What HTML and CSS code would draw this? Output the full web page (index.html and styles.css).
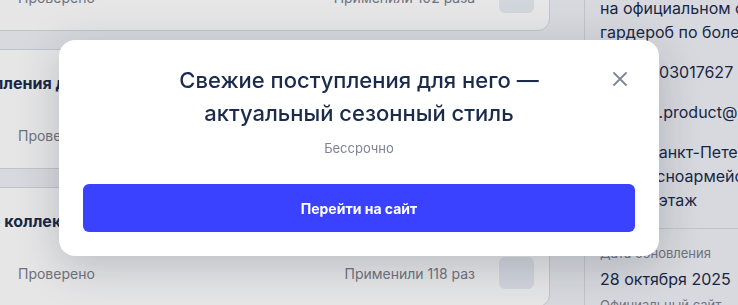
FILE: index.html
```html
<!DOCTYPE html>
<html lang="ru">
<head>
<meta charset="utf-8">
<title>Промокод</title>
<link rel="stylesheet" href="styles.css">
</head>
<body>
<div class="page">
  <div class="feed">
    <div class="card">
      <div class="card-title">Дарим скидку на первый заказ в приложении</div>
      <div class="card-meta">
        <span class="status">Проверено</span>
        <div class="usage"><span>Применили 102 раза</span><span class="thumb"></span></div>
      </div>
    </div>
    <div class="card">
      <div class="card-title">Свежие поступления для него — актуальный сезонный стиль</div>
      <div class="card-meta">
        <span class="status">Проверено</span>
        <div class="usage"><span>Применили 96 раз</span><span class="thumb"></span></div>
      </div>
    </div>
    <div class="card">
      <div class="card-title t3">Скидки на всю коллекцию сезона</div>
      <div class="card-meta">
        <span class="status">Проверено</span>
        <div class="usage"><span>Применили 118 раз</span><span class="thumb"></span></div>
      </div>
    </div>
  </div>
  <aside class="sidebar">
    <div class="info">
      <p>на официальном сайте бренда, обновляющего</p>
      <p>гардероб по более доступным ценам</p>
    </div>
    <p class="info">ИНН 7803017627</p>
    <p class="info">support.product@mail.ru</p>
    <div class="info">
      <p>РФ, г. Санкт-Петербург,</p>
      <p>ул. Красноармейская, д. 5,</p>
      <p>д. 12, 2 этаж</p>
    </div>
    <div class="facts">
      <div class="fact-label">Дата обновления</div>
      <div class="fact-value">28 октября 2025</div>
      <div class="fact-label next">Официальный сайт</div>
    </div>
  </aside>
</div>

<div class="overlay">
  <div class="modal">
    <button class="close" aria-label="Закрыть">
      <svg width="14" height="14" viewBox="0 0 14 14"><path d="M1 1L13 13M13 1L1 13" stroke="currentColor" stroke-width="1.8" stroke-linecap="round"/></svg>
    </button>
    <h2 class="modal-title">Свежие поступления для него —<br>актуальный сезонный стиль</h2>
    <div class="modal-term">Бессрочно</div>
    <button class="cta">Перейти на сайт</button>
  </div>
</div>
</body>
</html>
```
FILE: styles.css
```css
* { box-sizing: border-box; }
html, body {
  margin: 0;
  width: 738px;
  height: 305px;
  overflow: hidden;
}
body {
  font-family: Inter, "Noto Sans", "Liberation Sans", sans-serif;
  background: #eff1f5;
  color: #1b2b4b;
}
p { margin: 0; }

.page {
  display: flex;
  align-items: flex-start;
}

.feed {
  width: 690px;
  margin-left: -140px;
  margin-top: -89px;
  display: flex;
  flex-direction: column;
  gap: 18px;
  flex-shrink: 0;
}
.card {
  height: 120px;
  background: #ffffff;
  border: 1px solid #d6d9df;
  border-radius: 12px;
  padding: 21px 15px 0 24px;
}
.card-title {
  font-size: 16px;
  font-weight: 700;
  line-height: 24px;
  white-space: nowrap;
  overflow: hidden;
  margin-left: -6px;
}
.card-title.t3 { margin-left: -5px; }
.card-meta {
  margin-top: 24px;
  padding-left: 133px;
  display: flex;
  align-items: center;
  justify-content: space-between;
  font-size: 14px;
  color: #7a808b;
}
.usage {
  display: flex;
  align-items: center;
  gap: 24px;
}
.thumb {
  width: 35px;
  height: 32px;
  border-radius: 6px;
  background: #e8ecf3;
}

.sidebar {
  margin-left: 34px;
  margin-top: -4px;
  border-left: 1px solid #d6d9df;
  padding-left: 15px;
  height: 320px;
  width: 300px;
  flex-shrink: 0;
  font-size: 16px;
  line-height: 24px;
  white-space: nowrap;
}
.info + .info { margin-top: 16px; }
.facts {
  margin-top: 16px;
  border-top: 1px solid #d6d9df;
  padding-top: 14px;
}
.fact-label {
  font-size: 13px;
  line-height: 20px;
  color: #7a808b;
}
.fact-value {
  margin-top: 4px;
  font-size: 16px;
  line-height: 24px;
}
.fact-label.next { margin-top: 4px; }

.overlay {
  position: fixed;
  inset: 0;
  background: rgba(10, 14, 24, 0.1);
  display: flex;
  align-items: center;
  justify-content: center;
  padding: 0 20px 9px 0;
}
.modal {
  position: relative;
  width: 600px;
  background: #ffffff;
  border-radius: 16px;
  padding: 24px;
  box-shadow: 0 10px 44px rgba(30, 40, 60, 0.22);
  text-align: center;
}
.close {
  position: absolute;
  top: 32px;
  right: 32px;
  width: 14px;
  height: 14px;
  padding: 0;
  border: 0;
  background: none;
  color: #7d8794;
  display: flex;
}
.modal-title {
  margin: 0;
  font-size: 22px;
  font-weight: 500;
  line-height: 33px;
  color: #1b2b4b;
}
.modal-term {
  margin-top: 8px;
  font-size: 13px;
  line-height: 20px;
  color: #7c8393;
}
.cta {
  display: block;
  width: 100%;
  height: 48px;
  margin-top: 26px;
  border: 0;
  border-radius: 6px;
  background: #3a42ff;
  color: #ffffff;
  font-family: inherit;
  font-size: 14px;
  font-weight: 700;
}
```
